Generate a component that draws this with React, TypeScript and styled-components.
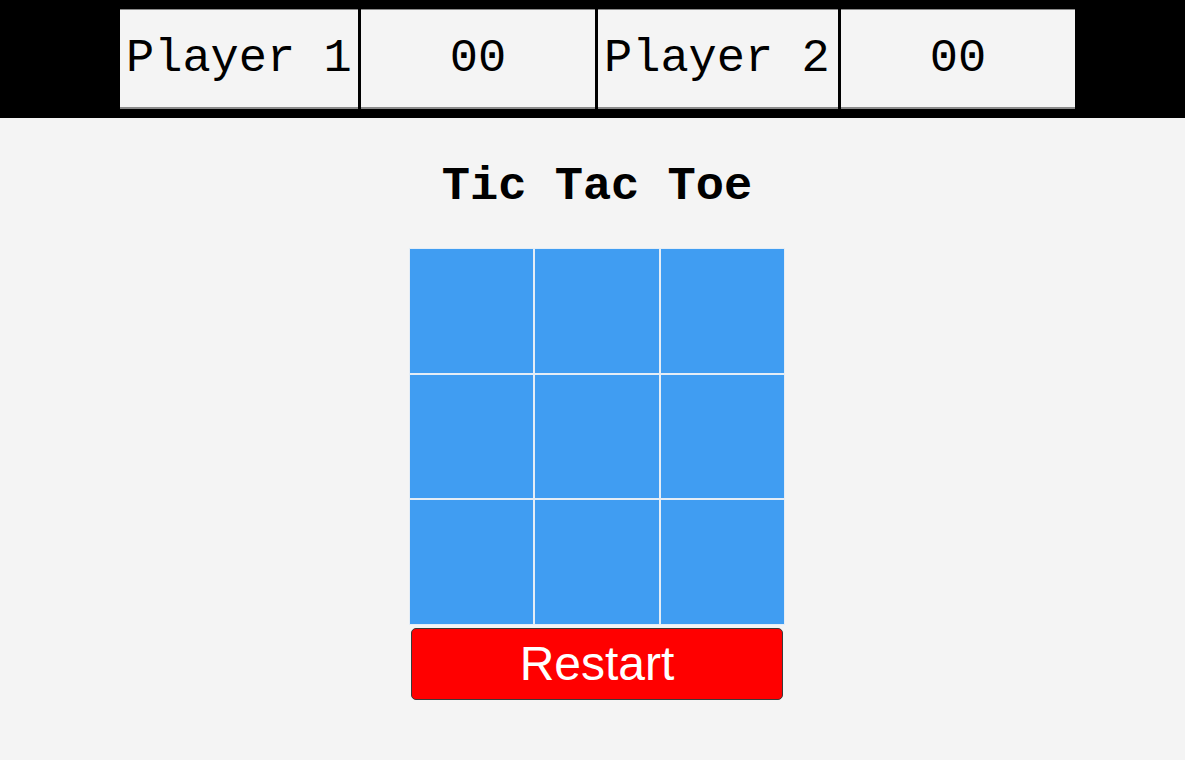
import React from "react";
import styled, { createGlobalStyle } from "styled-components";

const Global = createGlobalStyle`
  html, body { margin: 0; padding: 0; background: #f4f4f4; }
  body { font-family: "Liberation Mono", "Courier New", monospace; }
`;

const ScoreBar = styled.header`
  background: #000;
  height: 118px;
  box-sizing: border-box;
  padding: 9px 0 9px 120px;
  display: flex;
  gap: 3px;
`;

const ScoreCell = styled.div<{ $w: number; $align: "left" | "center" }>`
  width: ${(p) => p.$w}px;
  box-sizing: border-box;
  background: #f4f4f4;
  border-top: 1px solid #8a8a8a;
  border-bottom: 2px solid #8a8a8a;
  display: flex;
  align-items: center;
  justify-content: ${(p) => (p.$align === "left" ? "flex-start" : "center")};
  padding-left: ${(p) => (p.$align === "left" ? "6px" : "0")};
  font-family: "Liberation Mono", "Courier New", monospace;
  font-size: 47px;
  color: #000;
  white-space: nowrap;
`;

const Main = styled.main`
  display: flex;
  flex-direction: column;
  align-items: center;
  padding-left: 9px;
`;

const Title = styled.h1`
  margin: 42px 0 0;
  font-family: "Liberation Mono", "Courier New", monospace;
  font-weight: bold;
  font-size: 47px;
  line-height: 54px;
  color: #000;
`;

const Board = styled.div`
  margin-top: 34px;
  width: 376px;
  height: 377px;
  display: grid;
  grid-template-columns: repeat(3, 1fr);
  grid-template-rows: repeat(3, 1fr);
`;

const Square = styled.button`
  box-sizing: border-box;
  margin: 0;
  padding: 0;
  background: #409df2;
  border: 1px solid #e4edf6;
  cursor: pointer;
`;

const RestartButton = styled.button`
  margin-top: 3px;
  width: 372px;
  height: 72px;
  box-sizing: border-box;
  background: #ff0000;
  border: 1px solid #3a3a3a;
  border-radius: 5px;
  color: #fff;
  font-family: "Liberation Sans", Arial, sans-serif;
  font-size: 48px;
  line-height: 1;
  cursor: pointer;
`;

export default function App() {
  return (
    <>
      <Global />
      <ScoreBar>
        <ScoreCell $w={238} $align="left">Player 1</ScoreCell>
        <ScoreCell $w={234} $align="center">00</ScoreCell>
        <ScoreCell $w={240} $align="left">Player 2</ScoreCell>
        <ScoreCell $w={234} $align="center">00</ScoreCell>
      </ScoreBar>
      <Main>
        <Title>Tic Tac Toe</Title>
        <Board>
          {Array.from({ length: 9 }).map((_, i) => (
            <Square key={i} aria-label={`square ${i + 1}`} />
          ))}
        </Board>
        <RestartButton>Restart</RestartButton>
      </Main>
    </>
  );
}
